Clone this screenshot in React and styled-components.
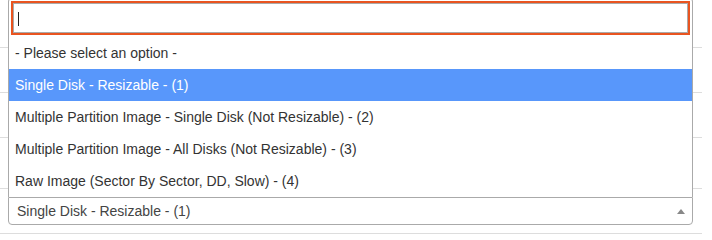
import styled, { createGlobalStyle } from "styled-components"

const GlobalStyle = createGlobalStyle`
  html, body {
    margin: 0;
    padding: 0;
    background: #fff;
  }
  body {
    font-family: "Liberation Sans", Arial, sans-serif;
    font-size: 14px;
    color: #333;
  }
`

const options = [
  { id: 0, label: '- Please select an option -' },
  { id: 1, label: 'Single Disk - Resizable - (1)' },
  { id: 2, label: 'Multiple Partition Image - Single Disk (Not Resizable) - (2)' },
  { id: 3, label: 'Multiple Partition Image - All Disks (Not Resizable) - (3)' },
  { id: 4, label: 'Raw Image (Sector By Sector, DD, Slow) - (4)' },
]

const rowHeights = [47, 44, 44, 50]

const Page = styled.div`
  width: 702px;
  height: 237px;
  overflow: hidden;
`

const TableRow = styled.div`
  height: ${p => p.h}px;
  border-bottom: 1px solid #ddd;
  box-sizing: content-box;
`

const Cell = styled.div`
  padding: 8px 9px 8px 8px;
  border-bottom: 1px solid #ddd;
`

const SelectWrap = styled.div`
  position: relative;
  width: 685px;
`

const Selection = styled.div`
  position: relative;
  box-sizing: border-box;
  height: 28px;
  border: 1px solid #aaa;
  border-radius: 0 0 4px 4px;
  background: #fff;
  color: #444;
  line-height: 26px;
  padding: 0 20px 0 8px;
  white-space: nowrap;
`

const ArrowBox = styled.span`
  position: absolute;
  top: 1px;
  right: 1px;
  width: 20px;
  height: 26px;
  top: 0;

  &::after {
    content: "";
    position: absolute;
    left: 50%;
    top: 50%;
    margin-left: -4px;
    margin-top: -2px;
    border-style: solid;
    border-width: 0 4px 5px 4px;
    border-color: transparent transparent #888 transparent;
  }
`

const Dropdown = styled.div`
  position: absolute;
  left: 0;
  right: 0;
  bottom: 100%;
  background: #fff;
  border: 1px solid #aaa;
  border-bottom: none;
  border-radius: 4px 4px 0 0;
`

const SearchBox = styled.div`
  padding: 4px;
`

const SearchField = styled.div`
  box-sizing: border-box;
  height: 30px;
  border: 1px solid #aaa;
  outline: 2px solid #e95420;
  padding: 4px;
  display: flex;
  align-items: center;
`

const Caret = styled.span`
  display: block;
  width: 1px;
  height: 14px;
  margin-top: 2px;
  background: #222;
`

const Results = styled.ul`
  list-style: none;
  margin: 0;
  padding: 0;
`

const Option = styled.li`
  padding: 6px;
  line-height: 20px;
  white-space: nowrap;
  background: ${p => (p.highlighted ? '#5897fb' : 'transparent')};
  color: ${p => (p.highlighted ? '#fff' : '#333')};
`

const App = () => {
  const selected = 1

  return (
    <Page>
      <GlobalStyle />
      {rowHeights.map((h, i) => (
        <TableRow key={i} h={h} />
      ))}
      <Cell>
        <SelectWrap>
          <Dropdown>
            <SearchBox>
              <SearchField>
                <Caret />
              </SearchField>
            </SearchBox>
            <Results>
              {options.map(opt => (
                <Option key={opt.id} highlighted={opt.id === selected}>
                  {opt.label}
                </Option>
              ))}
            </Results>
          </Dropdown>
          <Selection>
            {options[selected].label}
            <ArrowBox />
          </Selection>
        </SelectWrap>
      </Cell>
    </Page>
  )
}

export default App
